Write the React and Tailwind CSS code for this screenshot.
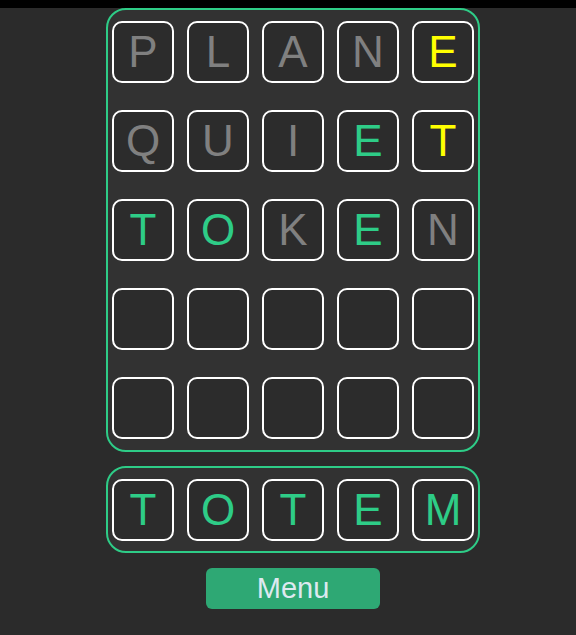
import React from 'react';

const GREY = 'text-[#808080]';
const YELLOW = 'text-[#ffff00]';
const GREEN = 'text-[#2ecc87]';

const guesses = [
  [['P', GREY], ['L', GREY], ['A', GREY], ['N', GREY], ['E', YELLOW]],
  [['Q', GREY], ['U', GREY], ['I', GREY], ['E', GREEN], ['T', YELLOW]],
  [['T', GREEN], ['O', GREEN], ['K', GREY], ['E', GREEN], ['N', GREY]],
  [['', GREY], ['', GREY], ['', GREY], ['', GREY], ['', GREY]],
  [['', GREY], ['', GREY], ['', GREY], ['', GREY], ['', GREY]],
];

const answer = ['T', 'O', 'T', 'E', 'M'];

const Tile = ({ letter, color }) => (
  <div className={`w-[62px] h-[62px] rounded-[10px] border-2 border-white bg-[#2c2c2c] flex items-center justify-center text-[44px] leading-none ${color}`}>
    {letter}
  </div>
);

export default function App() {
  return (
    <div className="min-h-[635px] bg-[#2b2b2b] font-['Liberation_Sans',Arial,sans-serif]">
      <div className="h-2 bg-black" />
      <div className="flex flex-col items-center pl-[10px]">
        {/* board */}
        <div className="w-[374px] border-2 border-[#2ecc87] rounded-[20px] bg-[#323232] px-1 pt-[11px] pb-[11px] grid grid-cols-5 gap-x-[13px] gap-y-[27px]">
          {guesses.flatMap((row, r) =>
            row.map(([l, c], i) => <Tile key={`${r}-${i}`} letter={l} color={c} />)
          )}
        </div>

        {/* answer */}
        <div className="mt-[14px] w-[374px] border-2 border-[#2ecc87] rounded-[20px] bg-[#323232] px-1 pt-[11px] pb-[10px] grid grid-cols-5 gap-x-[13px]">
          {answer.map((l, i) => <Tile key={i} letter={l} color={GREEN} />)}
        </div>

        <button className="mt-[15px] w-[174px] h-[41px] rounded-md bg-[#2ea874] text-[#dde9f0] text-[29px] leading-none">
          Menu
        </button>
      </div>
    </div>
  );
}
